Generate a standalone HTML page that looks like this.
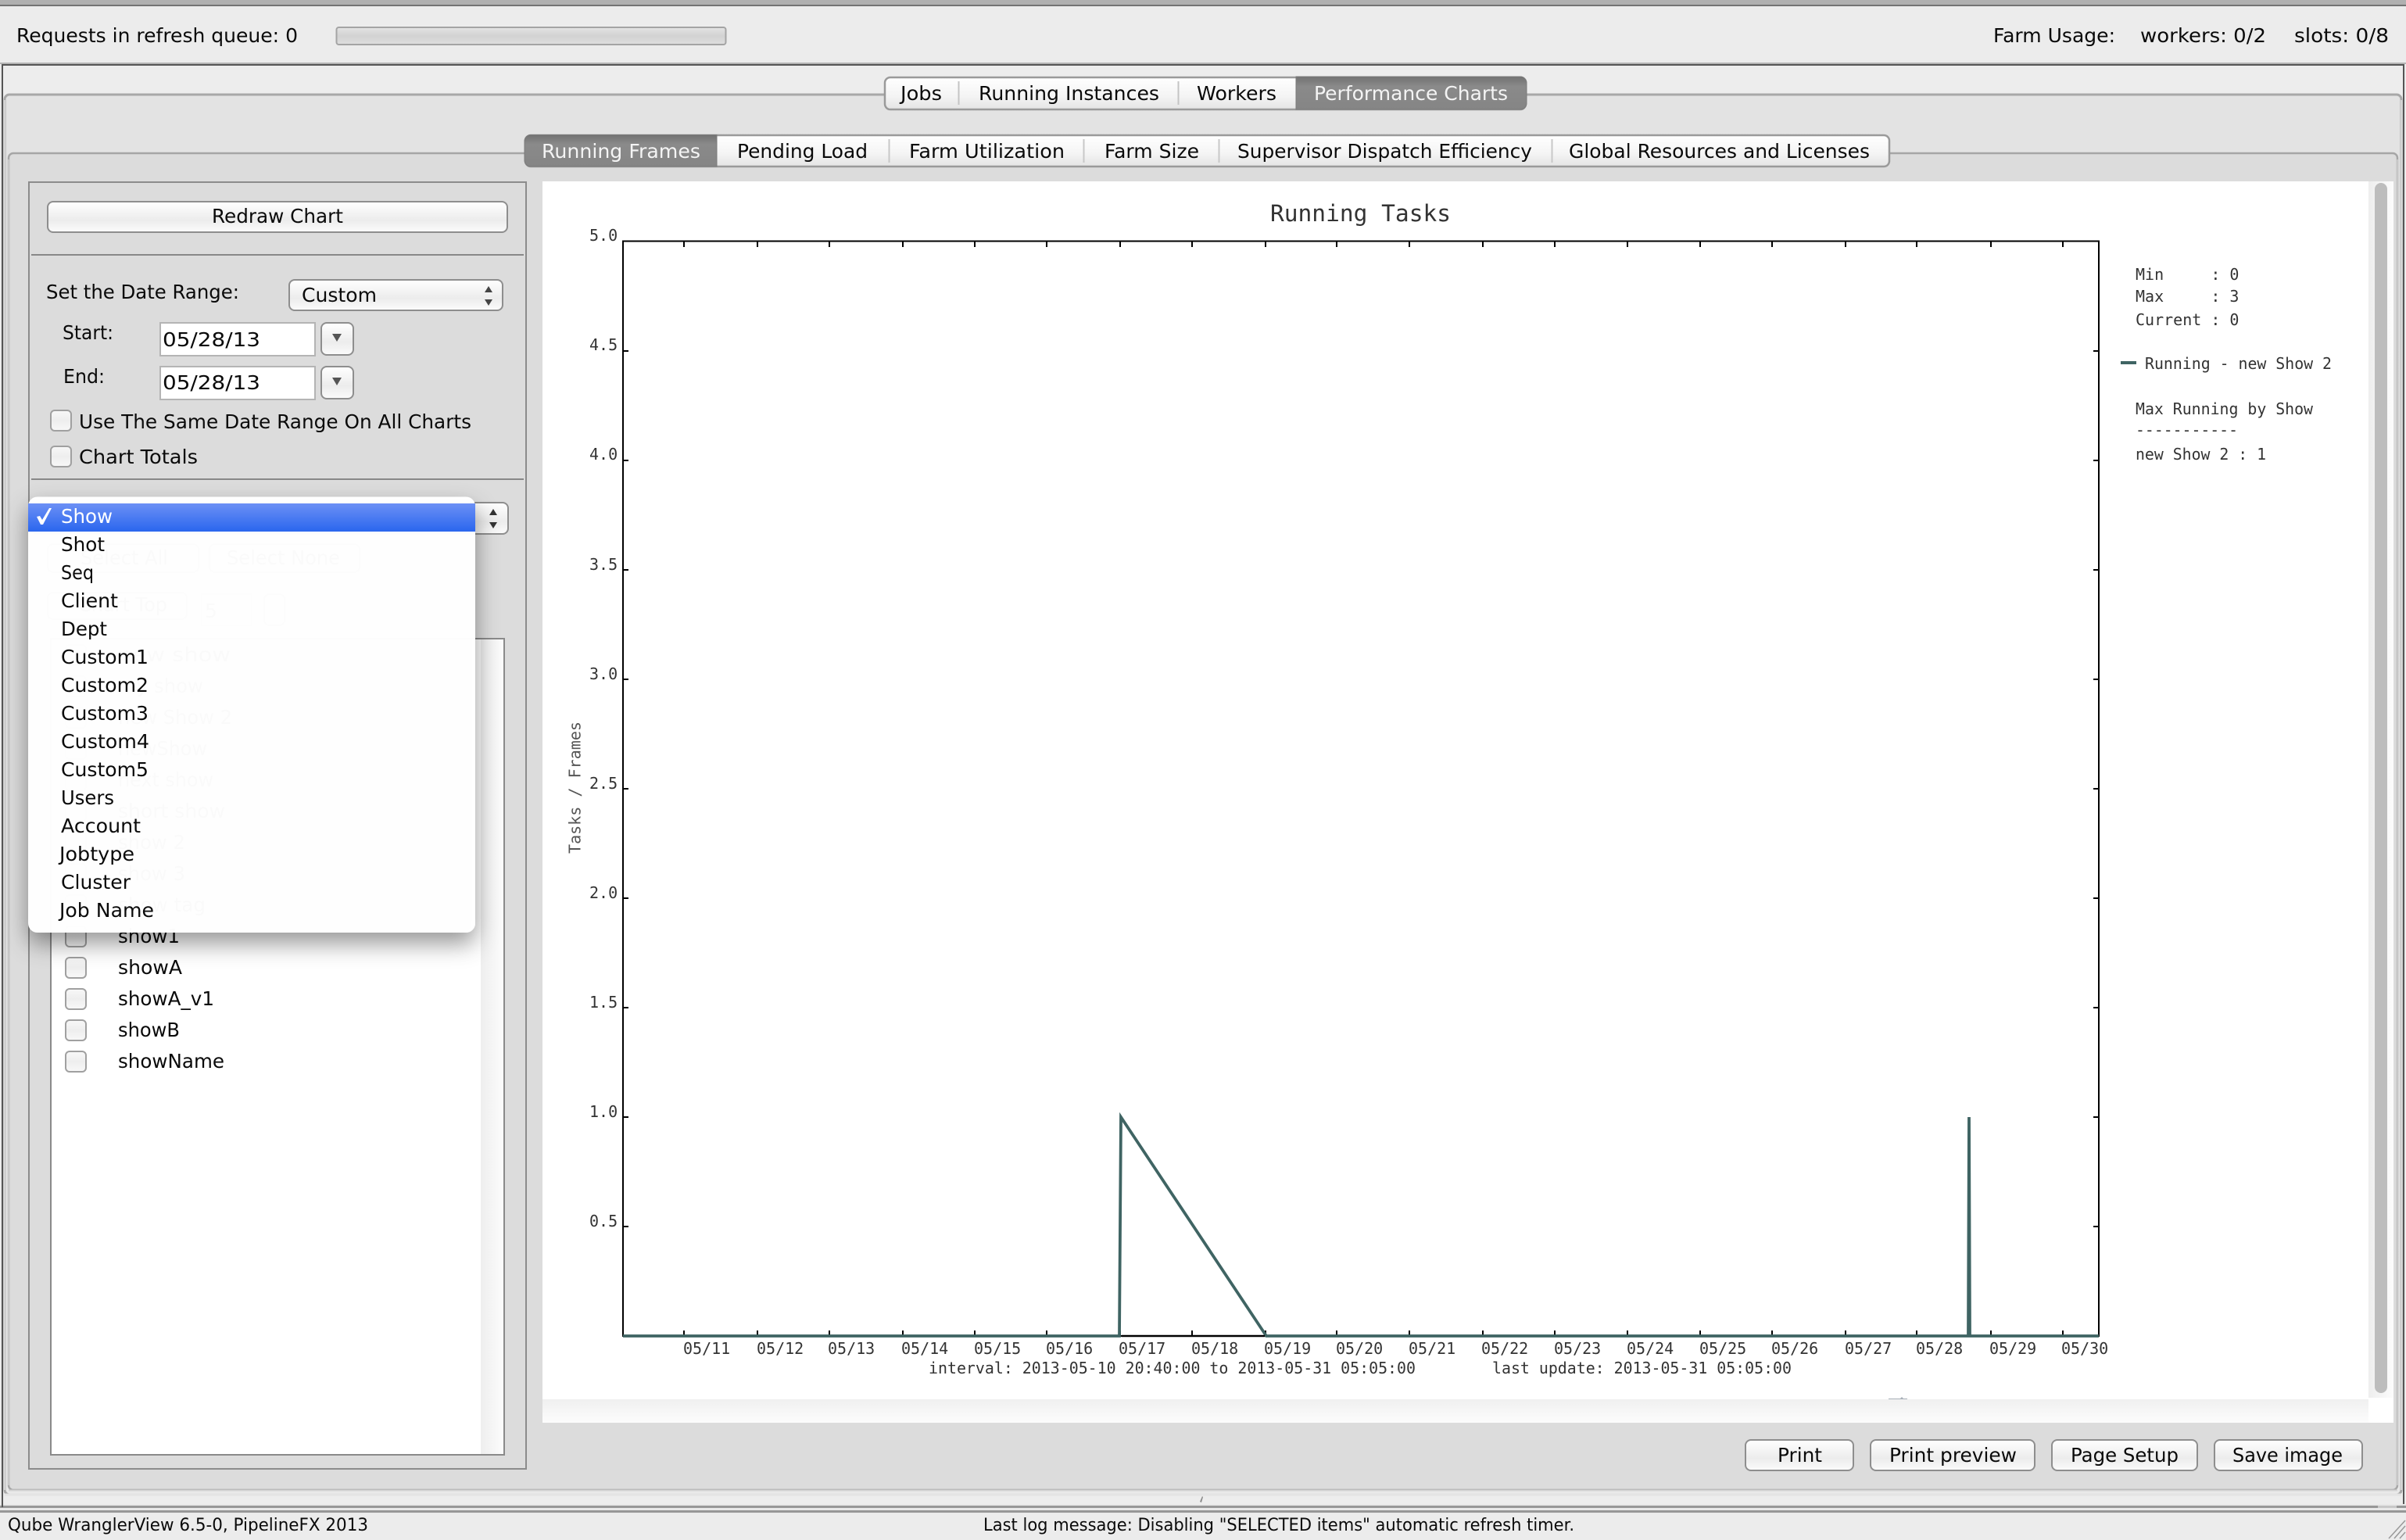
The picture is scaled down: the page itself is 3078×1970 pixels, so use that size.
<!DOCTYPE html>
<html><head><meta charset="utf-8"><title>Qube WranglerView</title>
<style>
html,body{margin:0;padding:0;background:#ececec;width:3078px;height:1970px;overflow:hidden}
svg{display:block}
.u{font-family:"DejaVu Sans","Liberation Sans",sans-serif;font-size:25px;fill:#0a0a0a}
.s{font-size:22px}
.w{fill:#fff}
.m{font-family:"DejaVu Sans Mono","Liberation Mono",monospace;font-size:20px;fill:#333;white-space:pre}
.b{fill:url(#btn);stroke:#8e8e8e;stroke-width:2}
.c{fill:url(#chk);stroke:#a0a0a0;stroke-width:2}
.t{stroke:#000;stroke-width:2;fill:none}
</style></head>
<body>
<svg xmlns="http://www.w3.org/2000/svg" width="3078" height="1970" viewBox="0 0 3078 1970">
<defs>
<linearGradient id="btn" x1="0" y1="0" x2="0" y2="1"><stop offset="0" stop-color="#fff"/><stop offset=".45" stop-color="#f1f1f1"/><stop offset=".6" stop-color="#ececec"/><stop offset="1" stop-color="#fbfbfb"/></linearGradient>
<linearGradient id="chk" x1="0" y1="0" x2="0" y2="1"><stop offset="0" stop-color="#f8f8f8"/><stop offset=".5" stop-color="#eeeeee"/><stop offset="1" stop-color="#f8f8f8"/></linearGradient>
<linearGradient id="seg" x1="0" y1="0" x2="0" y2="1"><stop offset="0" stop-color="#fff"/><stop offset=".6" stop-color="#f4f4f4"/><stop offset="1" stop-color="#e4e4e4"/></linearGradient>
<linearGradient id="act" x1="0" y1="0" x2="0" y2="1"><stop offset="0" stop-color="#727272"/><stop offset=".3" stop-color="#8a8a8a"/><stop offset="1" stop-color="#858585"/></linearGradient>
<linearGradient id="prog" x1="0" y1="0" x2="0" y2="1"><stop offset="0" stop-color="#e4e4e4"/><stop offset=".5" stop-color="#d2d2d2"/><stop offset="1" stop-color="#dedede"/></linearGradient>
<linearGradient id="sel" x1="0" y1="0" x2="0" y2="1"><stop offset="0" stop-color="#6c90f5"/><stop offset="1" stop-color="#2a66ee"/></linearGradient>
<linearGradient id="hb" x1="0" y1="0" x2="0" y2="1"><stop offset="0" stop-color="#f0f0f0"/><stop offset="1" stop-color="#fcfcfc"/></linearGradient>
<linearGradient id="vb" x1="0" y1="0" x2="1" y2="0"><stop offset="0" stop-color="#eeeeee"/><stop offset="1" stop-color="#fcfcfc"/></linearGradient>
<linearGradient id="p1" x1="0" y1="0" x2="0" y2="1"><stop offset="0" stop-color="#e3e3e3"/><stop offset="1" stop-color="#e9e9e9"/></linearGradient>
<filter id="sh" x="-10%" y="-10%" width="120%" height="125%"><feDropShadow dx="0" dy="14" stdDeviation="15" flood-color="#000" flood-opacity=".42"/></filter>
</defs>

<!-- window base -->
<rect width="3078" height="1970" fill="#ececec"/>
<rect width="3078" height="6" fill="#b0b0b0"/>
<rect y="6" width="3078" height="2" fill="#737373"/>
<text class="u" x="21" y="54" textLength="360" lengthAdjust="spacingAndGlyphs">Requests in refresh queue: 0</text>
<rect x="430.5" y="35" width="498" height="22" rx="3" fill="url(#prog)" stroke="#a4a4a4" stroke-width="2"/>
<text class="u" x="2550" y="54" textLength="156" lengthAdjust="spacingAndGlyphs">Farm Usage:</text>
<text class="u" x="2738" y="54" textLength="161" lengthAdjust="spacingAndGlyphs">workers: 0/2</text>
<text class="u" x="2935" y="54" textLength="121" lengthAdjust="spacingAndGlyphs">slots: 0/8</text>

<!-- outer frame -->
<rect x="0" y="80" width="3078" height="2" fill="#b4b4b4"/>
<rect x="3" y="83" width="3072" height="1845" fill="#ededed" stroke="#555" stroke-width="2"/>
<rect x="0" y="1924" width="3078" height="12" fill="#e8e8e8"/>
<rect x="0" y="1926" width="3078" height="3" fill="#979797"/>
<rect x="0" y="1932" width="3078" height="3" fill="#979797"/>
<rect x="3042" y="1926" width="24" height="3" fill="#c8c8c8"/>
<path d="M1535 1921l3-7 1 1-2 7z" fill="#8a8a8a"/>

<!-- pane 1 -->
<rect x="6" y="121" width="3066" height="1791" rx="6" fill="url(#p1)" stroke="#a8a8a8" stroke-width="3"/>
<path d="M6 1912H3072" stroke="#e4e4e4" stroke-width="3"/>
<path d="M6 128V1906M3072 128V1906" stroke="#d4d4d4" stroke-width="2"/>
<rect x="2" y="83" width="2" height="1845" fill="#555"/>
<!-- top tabs -->
<rect x="1132" y="99" width="820" height="41" rx="7" fill="url(#seg)" stroke="#9a9a9a" stroke-width="2.5"/>
<path d="M1658 98H1945a8 8 0 0 1 8 8V132a8 8 0 0 1-8 8H1658Z" fill="url(#act)" stroke="#7b7b7b" stroke-width="1"/>
<path d="M1226.500 104V134M1507.500 104V134" stroke="#c4c4c4" stroke-width="2"/>
<text class="u" x="1152" y="128" textLength="53" lengthAdjust="spacingAndGlyphs">Jobs</text>
<text class="u" x="1252" y="128" textLength="231" lengthAdjust="spacingAndGlyphs">Running Instances</text>
<text class="u" x="1531" y="128" textLength="102" lengthAdjust="spacingAndGlyphs">Workers</text>
<text class="u w" x="1681" y="128" textLength="248" lengthAdjust="spacingAndGlyphs" style="fill:#f4f4f4">Performance Charts</text>

<!-- pane 2 -->
<rect x="11" y="196" width="3056" height="1710" rx="6" fill="#dcdcdc" stroke="#a6a6a6" stroke-width="2.500"/>
<path d="M11 1906.500H3067" stroke="#d3d3d3" stroke-width="2"/>
<path d="M11 204V1900M3067 204V1900" stroke="#c6c6c6" stroke-width="2"/>
<!-- sub tabs -->
<rect x="672" y="173" width="1745" height="40" rx="7" fill="url(#seg)" stroke="#9a9a9a" stroke-width="2.500"/>
<path d="M917 172.500H679a8 8 0 0 0-8 8V205a8 8 0 0 0 8 8H917Z" fill="url(#act)" stroke="#7b7b7b" stroke-width="1"/>
<path d="M1137.500 178V208M1386.500 178V208M1559.500 178V208M1985.500 178V208" stroke="#c8c8c8" stroke-width="2"/>
<text class="u w" x="693" y="202" textLength="203" lengthAdjust="spacingAndGlyphs" style="fill:#f4f4f4">Running Frames</text>
<text class="u" x="943" y="202" textLength="167" lengthAdjust="spacingAndGlyphs">Pending Load</text>
<text class="u" x="1163" y="202" textLength="199" lengthAdjust="spacingAndGlyphs">Farm Utilization</text>
<text class="u" x="1413" y="202" textLength="121" lengthAdjust="spacingAndGlyphs">Farm Size</text>
<text class="u" x="1583" y="202" textLength="377" lengthAdjust="spacingAndGlyphs">Supervisor Dispatch Efficiency</text>
<text class="u" x="2007" y="202" textLength="385" lengthAdjust="spacingAndGlyphs">Global Resources and Licenses</text>

<!-- left group box -->
<rect x="37" y="233" width="636" height="1646" fill="#dcdcdc" stroke="#8c8c8c" stroke-width="2"/>
<rect x="61" y="258" width="588" height="39" rx="7" class="b"/>
<text class="u" x="271" y="285" textLength="168" lengthAdjust="spacingAndGlyphs">Redraw Chart</text>
<rect x="40" y="325" width="630" height="2" fill="#888"/>
<text class="u" x="59" y="382" textLength="247" lengthAdjust="spacingAndGlyphs">Set the Date Range:</text>
<rect x="370" y="358" width="273" height="39" rx="7" class="b"/>
<text class="u" x="386" y="386" textLength="96" lengthAdjust="spacingAndGlyphs">Custom</text>
<path d="M625 366l5 8h-10zM625 391l5-8h-10z" fill="#444"/>
<text class="u" x="80" y="434" textLength="65" lengthAdjust="spacingAndGlyphs">Start:</text>
<rect x="205" y="413" width="198" height="42" fill="#fff" stroke="#b4b4b4" stroke-width="2"/>
<text class="u" x="208" y="443" textLength="125" lengthAdjust="spacingAndGlyphs">05/28/13</text>
<rect x="411" y="413" width="41" height="41" rx="7" class="b" stroke-width="2"/>
<path d="M425 427h12l-6 10z" fill="#555"/>
<text class="u" x="81" y="490" textLength="53" lengthAdjust="spacingAndGlyphs">End:</text>
<rect x="205" y="469" width="198" height="42" fill="#fff" stroke="#b4b4b4" stroke-width="2"/>
<text class="u" x="208" y="498" textLength="125" lengthAdjust="spacingAndGlyphs">05/28/13</text>
<rect x="411" y="469" width="41" height="41" rx="7" class="b"/>
<path d="M425 483h12l-6 10z" fill="#555"/>
<rect x="65" y="525" width="26" height="26" rx="5" class="c"/>
<text class="u" x="101" y="548" textLength="502" lengthAdjust="spacingAndGlyphs">Use The Same Date Range On All Charts</text>
<rect x="65" y="571" width="26" height="26" rx="5" class="c"/>
<text class="u" x="101" y="593" textLength="152" lengthAdjust="spacingAndGlyphs">Chart Totals</text>
<rect x="40" y="612" width="630" height="2" fill="#888"/>

<!-- combo under the popup -->
<rect x="40" y="643" width="610" height="40" rx="7" class="b"/>
<path d="M631 651l5 8h-10zM631 676l5-8h-10z" fill="#333"/>

<!-- things behind the translucent popup -->
<rect x="61" y="696" width="193" height="36" rx="7" class="b"/>
<text class="u" x="103" y="722" textLength="112" lengthAdjust="spacingAndGlyphs">Select All</text>
<rect x="268" y="696" width="192" height="36" rx="7" class="b"/>
<text class="u" x="290" y="722" textLength="145" lengthAdjust="spacingAndGlyphs">Select None</text>
<rect x="61" y="758" width="178" height="34" rx="7" class="b"/>
<text class="u" x="100" y="782" textLength="114" lengthAdjust="spacingAndGlyphs">Chart Top</text>
<rect x="258" y="760" width="64" height="40" fill="#fff" stroke="#b4b4b4" stroke-width="2"/>
<text class="u" x="262" y="790">5</text>
<rect x="338" y="760" width="26" height="40" rx="7" class="b"/>

<!-- list -->
<rect x="65" y="817" width="580" height="1044" fill="#fff" stroke="#8a8a8a" stroke-width="2"/>
<rect x="615" y="818" width="29" height="1042" fill="url(#vb)"/>
<g>
<rect x="84" y="825" width="26" height="26" rx="5" class="c"/><text class="u" x="151" y="846" textLength="144" lengthAdjust="spacingAndGlyphs">new show</text>
<rect x="84" y="865" width="26" height="26" rx="5" class="c"/><text class="u" x="151" y="886" textLength="109" lengthAdjust="spacingAndGlyphs">my show</text>
<rect x="84" y="905" width="26" height="26" rx="5" class="c"/><text class="u" x="151" y="926" textLength="146" lengthAdjust="spacingAndGlyphs">new Show 2</text>
<rect x="84" y="945" width="26" height="26" rx="5" class="c"/><text class="u" x="151" y="966" textLength="114" lengthAdjust="spacingAndGlyphs">newShow</text>
<rect x="84" y="985" width="26" height="26" rx="5" class="c"/><text class="u" x="151" y="1006" textLength="122" lengthAdjust="spacingAndGlyphs">next show</text>
<rect x="84" y="1025" width="26" height="26" rx="5" class="c"/><text class="u" x="151" y="1046" textLength="137" lengthAdjust="spacingAndGlyphs">short show</text>
<rect x="84" y="1065" width="26" height="26" rx="5" class="c"/><text class="u" x="151" y="1086" textLength="86" lengthAdjust="spacingAndGlyphs">show 2</text>
<rect x="84" y="1105" width="26" height="26" rx="5" class="c"/><text class="u" x="151" y="1126" textLength="86" lengthAdjust="spacingAndGlyphs">show 3</text>
<rect x="84" y="1145" width="26" height="26" rx="5" class="c"/><text class="u" x="151" y="1166" textLength="112" lengthAdjust="spacingAndGlyphs">show tag</text>
<rect x="84" y="1185" width="26" height="26" rx="5" class="c"/><text class="u" x="151" y="1206" textLength="79" lengthAdjust="spacingAndGlyphs">show1</text>
<rect x="84" y="1225" width="26" height="26" rx="5" class="c"/><text class="u" x="151" y="1246" textLength="82" lengthAdjust="spacingAndGlyphs">showA</text>
<rect x="84" y="1265" width="26" height="26" rx="5" class="c"/><text class="u" x="151" y="1286" textLength="123" lengthAdjust="spacingAndGlyphs">showA_v1</text>
<rect x="84" y="1305" width="26" height="26" rx="5" class="c"/><text class="u" x="151" y="1326" textLength="79" lengthAdjust="spacingAndGlyphs">showB</text>
<rect x="84" y="1345" width="26" height="26" rx="5" class="c"/><text class="u" x="151" y="1366" textLength="136" lengthAdjust="spacingAndGlyphs">showName</text>
</g>

<!-- chart panel -->
<rect x="694" y="232" width="2368" height="1558" fill="#fff"/>
<rect x="694" y="1790" width="2336" height="30" fill="url(#hb)"/>
<rect x="3030" y="232" width="32" height="1556" fill="url(#vb)"/>
<rect x="3030" y="1788" width="32" height="32" fill="#fff"/>
<rect x="3038" y="234" width="16" height="1548" rx="8" fill="#bdbdbd"/>
<path d="M2416 1790h24v-1h-5l-2-2-2 2h-15z" fill="#a8b0b8"/>

<!-- plot -->
<text class="m" x="1625" y="283" style="font-size:29.500px" textLength="231" lengthAdjust="spacingAndGlyphs">Running Tasks</text>
<rect x="797" y="308.500" width="1888" height="1400.500" fill="none" stroke="#000" stroke-width="2"/>
<path class="t" d="M875 309v7M969 309v7M1061 309v7M1155 309v7M1247 309v7M1339 309v7M1433 309v7M1525 309v7M1619 309v7M1710 309v7M1803 309v7M1897 309v7M1989 309v7M2082 309v7M2175 309v7M2267 309v7M2361 309v7M2452 309v7M2547 309v7M2639 309v7"/>
<path class="t" d="M875 1709v-7M969 1709v-7M1061 1709v-7M1155 1709v-7M1247 1709v-7M1339 1709v-7M1433 1709v-7M1525 1709v-7M1619 1709v-7M1710 1709v-7M1803 1709v-7M1897 1709v-7M1989 1709v-7M2082 1709v-7M2175 1709v-7M2267 1709v-7M2361 1709v-7M2452 1709v-7M2547 1709v-7M2639 1709v-7"/>
<path class="t" d="M797 449h7M797 589h7M797 729h7M797 869h7M797 1009h7M797 1149h7M797 1289h7M797 1429h7M797 1569h7M2685 449h-7M2685 589h-7M2685 729h-7M2685 869h-7M2685 1009h-7M2685 1149h-7M2685 1289h-7M2685 1429h-7M2685 1569h-7"/>
<path d="M797 1709H1432L1434 1429L1620 1709H2518L2519 1429L2520 1709H2685" fill="none" stroke="#3f6463" stroke-width="3.800" stroke-linejoin="miter"/>
<path d="M1435 1709H1618" stroke="#000" stroke-width="2.500"/>

<text class="m" x="754" y="308">5.0</text>
<text class="m" x="754" y="448">4.5</text>
<text class="m" x="754" y="588">4.0</text>
<text class="m" x="754" y="729">3.5</text>
<text class="m" x="754" y="869">3.0</text>
<text class="m" x="754" y="1009">2.5</text>
<text class="m" x="754" y="1149">2.0</text>
<text class="m" x="754" y="1289">1.5</text>
<text class="m" x="754" y="1429">1.0</text>
<text class="m" x="754" y="1569">0.5</text>
<text class="m" transform="translate(742.500 1092) rotate(-90)" textLength="169" lengthAdjust="spacingAndGlyphs" style="fill:#555">Tasks / Frames</text>

<g>
<text class="m" x="874" y="1732">05/11</text><text class="m" x="968" y="1732">05/12</text><text class="m" x="1059" y="1732">05/13</text><text class="m" x="1153" y="1732">05/14</text><text class="m" x="1246" y="1732">05/15</text><text class="m" x="1338" y="1732">05/16</text><text class="m" x="1431" y="1732">05/17</text><text class="m" x="1524" y="1732">05/18</text><text class="m" x="1617" y="1732">05/19</text><text class="m" x="1709" y="1732">05/20</text><text class="m" x="1802" y="1732">05/21</text><text class="m" x="1895" y="1732">05/22</text><text class="m" x="1988" y="1732">05/23</text><text class="m" x="2081" y="1732">05/24</text><text class="m" x="2174" y="1732">05/25</text><text class="m" x="2266" y="1732">05/26</text><text class="m" x="2360" y="1732">05/27</text><text class="m" x="2451" y="1732">05/28</text><text class="m" x="2545" y="1732">05/29</text><text class="m" x="2637" y="1732">05/30</text>
</g>
<text class="m" x="1188" y="1757" textLength="623" lengthAdjust="spacingAndGlyphs">interval: 2013-05-10 20:40:00 to 2013-05-31 05:05:00</text>
<text class="m" x="1909" y="1757" textLength="383" lengthAdjust="spacingAndGlyphs">last update: 2013-05-31 05:05:00</text>

<text class="m" x="2732" y="358">Min     : 0</text>
<text class="m" x="2732" y="386">Max     : 3</text>
<text class="m" x="2732" y="416">Current : 0</text>
<rect x="2713" y="462" width="20" height="4" fill="#3f6463"/>
<text class="m" x="2744" y="472" textLength="239" lengthAdjust="spacingAndGlyphs">Running - new Show 2</text>
<text class="m" x="2732" y="530" textLength="227" lengthAdjust="spacingAndGlyphs">Max Running by Show</text>
<text class="m" x="2732" y="557" textLength="131" lengthAdjust="spacingAndGlyphs">-----------</text>
<text class="m" x="2732" y="588" textLength="167" lengthAdjust="spacingAndGlyphs">new Show 2 : 1</text>

<!-- bottom buttons -->
<rect x="2233" y="1842" width="138" height="39" rx="7" class="b"/>
<text class="u" x="2274" y="1870" textLength="57" lengthAdjust="spacingAndGlyphs">Print</text>
<rect x="2393" y="1842" width="210" height="39" rx="7" class="b"/>
<text class="u" x="2417" y="1870" textLength="163" lengthAdjust="spacingAndGlyphs">Print preview</text>
<rect x="2625" y="1842" width="186" height="39" rx="7" class="b"/>
<text class="u" x="2649" y="1870" textLength="138" lengthAdjust="spacingAndGlyphs">Page Setup</text>
<rect x="2833" y="1842" width="189" height="39" rx="7" class="b"/>
<text class="u" x="2856" y="1870" textLength="141" lengthAdjust="spacingAndGlyphs">Save image</text>

<!-- status bar -->
<text class="u s" x="10" y="1958" textLength="461" lengthAdjust="spacingAndGlyphs">Qube WranglerView 6.5-0, PipelineFX 2013</text>
<text class="u s" x="1258" y="1958" textLength="756" lengthAdjust="spacingAndGlyphs">Last log message: Disabling "SELECTED items" automatic refresh timer.</text>
<path d="M3056 1968L3077 1945M3063 1968L3077 1952M3070 1968L3077 1960" stroke="#999" stroke-width="1.500" fill="none"/>

<!-- popup -->
<rect x="36" y="635.500" width="572" height="557.500" rx="12" fill="#fff" fill-opacity=".975" filter="url(#sh)"/>
<rect x="36" y="644" width="572" height="36" fill="url(#sel)"/>
<path d="M47 661l4-1 3 5 9-15h3l-11 21h-3z" fill="#fff"/>
<text class="u w" x="78" y="669" textLength="66" lengthAdjust="spacingAndGlyphs">Show</text>
<text class="u" x="78" y="705" textLength="56" lengthAdjust="spacingAndGlyphs">Shot</text>
<text class="u" x="78" y="741" textLength="42" lengthAdjust="spacingAndGlyphs">Seq</text>
<text class="u" x="78" y="777" textLength="73" lengthAdjust="spacingAndGlyphs">Client</text>
<text class="u" x="78" y="813" textLength="59" lengthAdjust="spacingAndGlyphs">Dept</text>
<text class="u" x="78" y="849" textLength="112" lengthAdjust="spacingAndGlyphs">Custom1</text>
<text class="u" x="78" y="885" textLength="112" lengthAdjust="spacingAndGlyphs">Custom2</text>
<text class="u" x="78" y="921" textLength="112" lengthAdjust="spacingAndGlyphs">Custom3</text>
<text class="u" x="78" y="957" textLength="113" lengthAdjust="spacingAndGlyphs">Custom4</text>
<text class="u" x="78" y="993" textLength="112" lengthAdjust="spacingAndGlyphs">Custom5</text>
<text class="u" x="78" y="1029" textLength="68" lengthAdjust="spacingAndGlyphs">Users</text>
<text class="u" x="78" y="1065" textLength="102" lengthAdjust="spacingAndGlyphs">Account</text>
<text class="u" x="76" y="1101" textLength="96" lengthAdjust="spacingAndGlyphs">Jobtype</text>
<text class="u" x="78" y="1137" textLength="89" lengthAdjust="spacingAndGlyphs">Cluster</text>
<text class="u" x="76" y="1173" textLength="121" lengthAdjust="spacingAndGlyphs">Job Name</text>
</svg>
</body></html>
